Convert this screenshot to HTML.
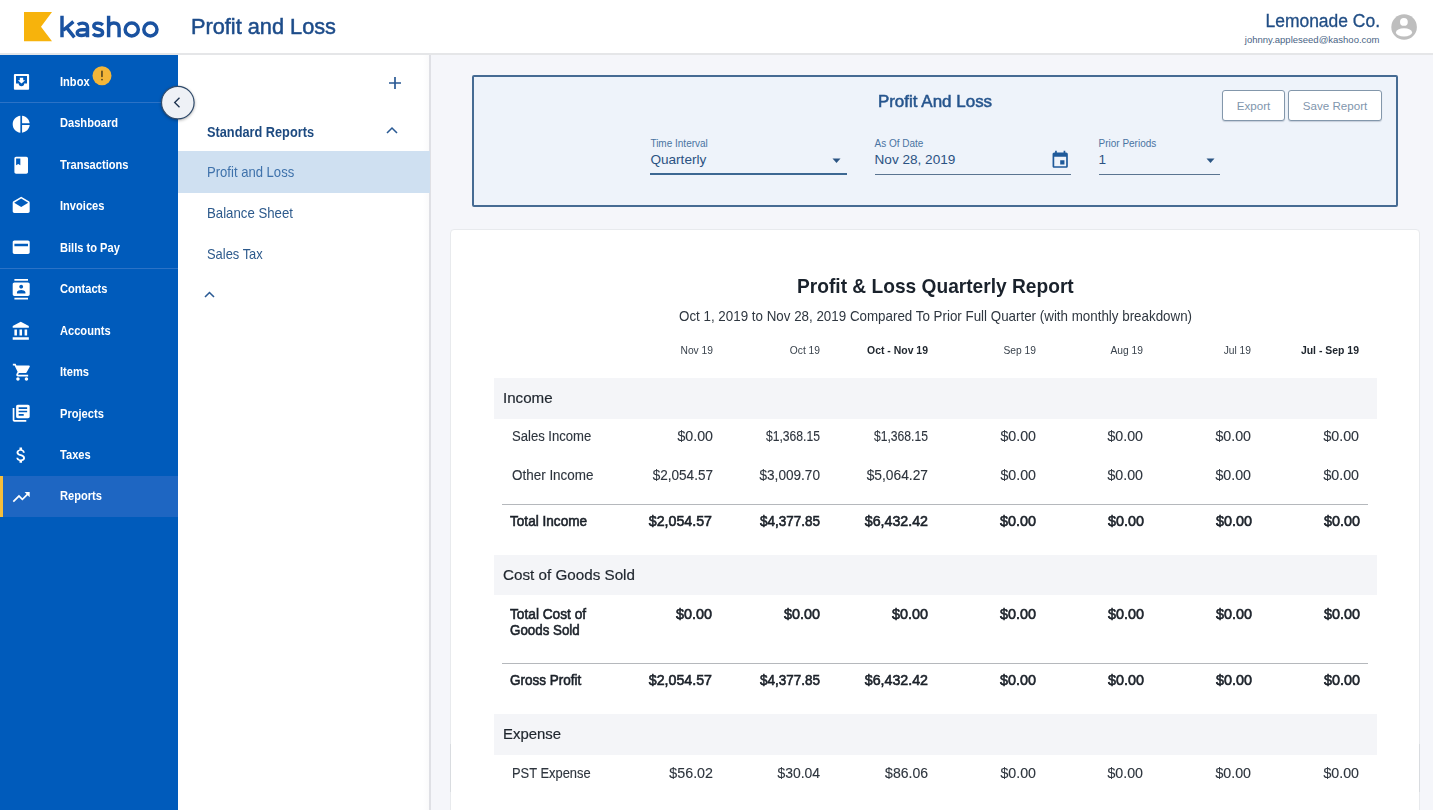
<!DOCTYPE html>
<html><head><meta charset="utf-8">
<style>
*{box-sizing:border-box;margin:0;padding:0}
html,body{width:1433px;height:810px;overflow:hidden;background:#f5f6fa;font-family:"Liberation Sans",sans-serif;position:relative}
.t{position:absolute;white-space:nowrap}
.r{position:absolute}
svg{position:absolute;overflow:visible}
</style></head><body>
<div class="r" style="left:0;top:0;width:1433px;height:54px;background:#fff"></div>
<div class="r" style="left:0;top:53px;width:1433px;height:2px;background:#e5e6e8"></div>
<div class="r" style="left:0;top:55px;width:178px;height:755px;background:#005bbb"></div>
<div class="r" style="left:178px;top:55px;width:251px;height:755px;background:#fff"></div>
<div class="r" style="left:423px;top:55px;width:6px;height:755px;background:linear-gradient(90deg,#fff,#fafafb)"></div>
<div class="r" style="left:429.2px;top:55px;width:1.4px;height:755px;background:#dfe0e5"></div>
<svg style="left:0;top:0" width="60" height="54"><polygon points="24,12 52,12 41,26.8 52,41.3 24,41.3" fill="#f7b30c"/></svg>
<svg style="left:0;top:0" width="170" height="54"><g fill="none" stroke="#1a52a0" stroke-width="3.45"><path d="M62,15.7 V37.3 M73.4,21.6 L63.3,30.3 M66.4,27.3 L74.4,37.3"/><path d="M77.8,24.7 C79.3,23.6 80.9,23.1 82.6,23.1 C85.9,23.1 87.5,24.8 87.5,27.6 V37.3 M87.5,29.7 H82.3 C79.2,29.7 77.2,31.1 77.2,32.7 C77.2,34.4 79,35.4 81.8,35.4 C85.2,35.4 87.5,33.8 87.5,31.5"/><path d="M102.9,25 C101.6,23.8 99.9,23.1 97.9,23.1 C95.4,23.1 93.8,24.3 93.8,26.1 C93.8,28 95.8,28.8 98.3,29.3 C101,29.8 102.6,30.8 102.6,32.8 C102.6,34.7 100.6,35.8 98,35.8 C95.9,35.8 94.2,35.1 93,33.8"/><path d="M108.6,15.7 V37.3 M108.6,28 C108.6,24.9 110.8,23 113.8,23 C117.1,23 119.1,25 119.1,28.4 V37.3"/><ellipse cx="131.75" cy="29.5" rx="6.6" ry="6.5"/><ellipse cx="150.4" cy="29.5" rx="6.6" ry="6.5"/></g></svg>
<div class="t" style="top:14.07px;font-size:21.3px;line-height:27.69px;color:#1d4c8a;font-weight:normal;-webkit-text-stroke:0.5px #1d4c8a;transform:scaleX(1.0206);transform-origin:0 0;left:190.8px;">Profit and Loss</div>
<div class="t" style="top:9.56px;font-size:18px;line-height:23.4px;color:#214e85;font-weight:normal;-webkit-text-stroke:0.3px #214e85;transform:scaleX(0.9698);transform-origin:100% 0;left:979.5px;width:400px;text-align:right;">Lemonade Co.</div>
<div class="t" style="top:33.93px;font-size:9.5px;line-height:12.35px;color:#4a6485;font-weight:normal;left:979.5px;width:400px;text-align:right;">johnny.appleseed@kashoo.com</div>
<svg style="left:1391px;top:13.5px" width="26" height="26" viewBox="0 0 26 26"><circle cx="13.1" cy="13.05" r="12.8" fill="#bebebe"/><circle cx="12.9" cy="7.9" r="3.9" fill="#fff"/><ellipse cx="13" cy="18.4" rx="8.1" ry="4.1" fill="#fff"/></svg>
<div class="r" style="left:0;top:475.5px;width:178px;height:41.5px;background:#1e66c2"></div>
<div class="r" style="left:0;top:475.5px;width:3px;height:41.5px;background:#f5be3c"></div>
<div class="r" style="left:0;top:102px;width:178px;height:1px;background:#2b72c6"></div>
<div class="r" style="left:0;top:268px;width:178px;height:1px;background:#2b72c6"></div>
<div class="t" style="top:75.04px;font-size:12.0px;line-height:15.6px;color:#ffffff;font-weight:bold;transform:scaleX(0.925);transform-origin:0 0;left:59.5px;">Inbox</div>
<svg style="left:0;top:0" width="40" height="100"><path d="M14.9,73.9 H28.1 Q29.1,73.9 29.1,74.9 V88.8 Q29.1,89.8 28.1,89.8 H14.9 Q13.9,89.8 13.9,88.8 V74.9 Q13.9,73.9 14.9,73.9Z M16,76.1 V83.6 H18.7 A2.75,2.75 0 0 0 24.2,83.6 H27 V76.1Z" fill="#fff" fill-rule="evenodd"/><path d="M19.8,77.8 H23.2 V80.3 H25.1 L21.5,83.4 L17.9,80.3 H19.8Z" fill="#fff"/></svg>
<div class="t" style="top:116.48px;font-size:12.0px;line-height:15.6px;color:#ffffff;font-weight:bold;transform:scaleX(0.925);transform-origin:0 0;left:59.5px;">Dashboard</div>
<svg style="left:11.30px;top:113.80px" width="20.4" height="20.4" viewBox="0 0 24 24"><path d="M11 2v20c-5.07-.5-9-4.79-9-10s3.93-9.5 9-10zm2.03 0v8.99H22c-.47-4.74-4.24-8.52-8.97-8.99zm0 11.01V22c4.74-.47 8.5-4.25 8.97-8.99h-8.97z" fill="#fff" fill-rule="evenodd"/></svg>
<div class="t" style="top:157.92px;font-size:12.0px;line-height:15.6px;color:#ffffff;font-weight:bold;transform:scaleX(0.925);transform-origin:0 0;left:59.5px;">Transactions</div>
<svg style="left:11.30px;top:154.80px" width="20.4" height="20.4" viewBox="0 0 24 24"><path d="M18 2H6c-1.1 0-2 .9-2 2v16c0 1.1.9 2 2 2h12c1.1 0 2-.9 2-2V4c0-1.1-.9-2-2-2zM6 4h5v8l-2.5-1.5L6 12V4z" fill="#fff" fill-rule="evenodd"/></svg>
<div class="t" style="top:199.36px;font-size:12.0px;line-height:15.6px;color:#ffffff;font-weight:bold;transform:scaleX(0.925);transform-origin:0 0;left:59.5px;">Invoices</div>
<svg style="left:11.30px;top:196.07px" width="20.4" height="20.4" viewBox="0 0 24 24"><path d="M21.99 8c0-.72-.37-1.35-.94-1.7L12 1 2.95 6.3C2.38 6.65 2 7.28 2 8v10c0 1.1.9 2 2 2h16c1.1 0 2-.9 2-2l-.01-10zM12 13L3.74 7.84 12 3l8.26 4.84L12 13z" fill="#fff" fill-rule="evenodd"/></svg>
<div class="t" style="top:240.80px;font-size:12.0px;line-height:15.6px;color:#ffffff;font-weight:bold;transform:scaleX(0.925);transform-origin:0 0;left:59.5px;">Bills to Pay</div>
<svg style="left:11.30px;top:237.40px" width="20.4" height="20.4" viewBox="0 0 24 24"><path d="M20 4H4c-1.11 0-1.99.89-1.99 2L2 18c0 1.11.89 2 2 2h16c1.11 0 2-.89 2-2V6c0-1.11-.89-2-2-2zM4 8v3h16V8z" fill="#fff" fill-rule="evenodd"/></svg>
<div class="t" style="top:282.24px;font-size:12.0px;line-height:15.6px;color:#ffffff;font-weight:bold;transform:scaleX(0.925);transform-origin:0 0;left:59.5px;">Contacts</div>
<svg style="left:11.30px;top:279.10px" width="20.4" height="20.4" viewBox="0 0 24 24"><path d="M20 0H4v2h16V0zM4 24h16v-2H4v2zM20 4H4c-1.1 0-2 .9-2 2v12c0 1.1.9 2 2 2h16c1.1 0 2-.9 2-2V6c0-1.1-.9-2-2-2zm-8 2.75c1.24 0 2.25 1.01 2.25 2.25s-1.01 2.25-2.25 2.25S9.75 10.24 9.75 9 10.76 6.75 12 6.75zM17 17H7v-1.5c0-1.670 3.33-2.5 5-2.5s5 .83 5 2.5V17z" fill="#fff" fill-rule="evenodd"/></svg>
<div class="t" style="top:323.68px;font-size:12.0px;line-height:15.6px;color:#ffffff;font-weight:bold;transform:scaleX(0.925);transform-origin:0 0;left:59.5px;">Accounts</div>
<svg style="left:11.30px;top:320.73px" width="20.4" height="20.4" viewBox="0 0 24 24"><path d="M4 10v7h3v-7H4zm6 0v7h3v-7h-3zM2 22h19v-3H2v3zm14-12v7h3v-7h-3zm-4.5-9L2 6v2h19V6l-9.5-5z" fill="#fff" fill-rule="evenodd"/></svg>
<div class="t" style="top:365.12px;font-size:12.0px;line-height:15.6px;color:#ffffff;font-weight:bold;transform:scaleX(0.925);transform-origin:0 0;left:59.5px;">Items</div>
<svg style="left:12.15px;top:361.70px" width="20.4" height="20.4" viewBox="0 0 24 24"><path d="M7 18c-1.1 0-1.99.9-1.99 2S5.9 22 7 22s2-.9 2-2-.9-2-2-2zM1 2v2h2l3.6 7.59-1.35 2.45c-.16.28-.25.61-.25.96 0 1.1.9 2 2 2h12v-2H7.420c-.14 0-.25-.11-.25-.25l.03-.12.9-1.63h7.450c.75 0 1.41-.41 1.75-1.03l3.58-6.49c.08-.14.12-.31.12-.48 0-.55-.45-1-1-1H5.21l-.94-2H1zm16 16c-1.1 0-1.99.9-1.99 2s.89 2 1.99 2 2-.9 2-2-.9-2-2-2z" fill="#fff" fill-rule="evenodd"/></svg>
<div class="t" style="top:406.56px;font-size:12.0px;line-height:15.6px;color:#ffffff;font-weight:bold;transform:scaleX(0.925);transform-origin:0 0;left:59.5px;">Projects</div>
<svg style="left:11.30px;top:403.20px" width="20.4" height="20.4" viewBox="0 0 24 24"><path d="M4 6H2v14c0 1.1.9 2 2 2h14v-2H4V6zm16-4H8c-1.1 0-2 .9-2 2v12c0 1.1.9 2 2 2h12c1.1 0 2-.9 2-2V4c0-1.1-.9-2-2-2zm-1 9H9V9h10v2zm-4 4H9v-2h6v2zm4-8H9V5h10v2z" fill="#fff" fill-rule="evenodd"/></svg>
<div class="t" style="top:448.00px;font-size:12.0px;line-height:15.6px;color:#ffffff;font-weight:bold;transform:scaleX(0.925);transform-origin:0 0;left:59.5px;">Taxes</div>
<svg style="left:11.30px;top:444.80px" width="20.4" height="20.4" viewBox="0 0 24 24"><path d="M11.8 10.9c-2.27-.59-3-1.2-3-2.15 0-1.09 1.01-1.85 2.7-1.850 1.78 0 2.44.85 2.5 2.1h2.21c-.07-1.72-1.12-3.3-3.21-3.81V3h-3v2.16c-1.94.42-3.5 1.68-3.5 3.61 0 2.31 1.91 3.46 4.7 4.13 2.5.6 3 1.48 3 2.41 0 .69-.49 1.79-2.7 1.79-2.06 0-2.87-.92-2.98-2.1h-2.2c.12 2.19 1.76 3.42 3.68 3.83V21h3v-2.15c1.95-.37 3.5-1.5 3.5-3.55 0-2.840-2.43-3.81-4.7-4.4z" fill="#fff" fill-rule="evenodd"/></svg>
<div class="t" style="top:489.44px;font-size:12.0px;line-height:15.6px;color:#ffffff;font-weight:bold;transform:scaleX(0.925);transform-origin:0 0;left:59.5px;">Reports</div>
<svg style="left:11.30px;top:486.50px" width="20.4" height="20.4" viewBox="0 0 24 24"><path d="M16 6l2.29 2.29-4.88 4.88-4-4L2 16.59 3.410 18l6-6 4 4 6.3-6.29L22 12V6z" fill="#fff" fill-rule="evenodd"/></svg>
<svg style="left:92px;top:65.5px" width="20" height="20" viewBox="0 0 20 20"><circle cx="10" cy="9.8" r="9.5" fill="#f4b638"/><rect x="9.1" y="4.6" width="1.7" height="6.6" rx="0.8" fill="#5a4a22"/><circle cx="10" cy="13.6" r="0.95" fill="#5a4a22"/></svg>
<svg style="left:160px;top:85px" width="36" height="36" viewBox="0 0 36 36"><circle cx="17.8" cy="17.6" r="16.3" fill="#eef1f6" stroke="#2f4a6a" stroke-width="1.2" style="filter:drop-shadow(0 1px 1.5px rgba(0,0,0,0.3))"/><path d="M19.5,12.8 L14.7,17.5 L19.5,22.2" fill="none" stroke="#1e3350" stroke-width="1.35"/></svg>
<div class="r" style="left:178px;top:151.3px;width:252px;height:41.4px;background:#cfe0f1"></div>
<svg style="left:388px;top:76px" width="14" height="14"><path d="M7,1 V13 M1,7 H13" stroke="#2a5a94" stroke-width="1.7"/></svg>
<div class="t" style="top:122.75px;font-size:14.0px;line-height:18.2px;color:#1d4a80;font-weight:bold;transform:scaleX(0.911);transform-origin:0 0;left:206.8px;">Standard Reports</div>
<svg style="left:385px;top:125px" width="14" height="10"><path d="M2,8 L7,3 L12,8" fill="none" stroke="#2a5a94" stroke-width="1.55"/></svg>
<div class="t" style="top:163.05px;font-size:14.5px;line-height:18.85px;color:#3f72ab;font-weight:normal;transform:scaleX(0.9016);transform-origin:0 0;left:206.6px;">Profit and Loss</div>
<div class="t" style="top:204.05px;font-size:14.5px;line-height:18.85px;color:#2d5a8c;font-weight:normal;transform:scaleX(0.9108);transform-origin:0 0;left:206.6px;">Balance Sheet</div>
<div class="t" style="top:245.45px;font-size:14.5px;line-height:18.85px;color:#2d5a8c;font-weight:normal;transform:scaleX(0.8898);transform-origin:0 0;left:206.6px;">Sales Tax</div>
<svg style="left:203px;top:289px" width="14" height="10"><path d="M2,8 L6.5,3.5 L11,8" fill="none" stroke="#2a5a94" stroke-width="1.55"/></svg>
<div class="r" style="left:472px;top:75px;width:926px;height:132px;border:2px solid #466b93;border-radius:2px;background:#eef3fa"></div>
<div class="t" style="top:91.46px;font-size:16.4px;line-height:21.32px;color:#26558d;font-weight:normal;-webkit-text-stroke:0.5px #26558d;transform:scaleX(1.0362);transform-origin:50% 0;left:535.3px;width:800px;text-align:center;">Profit And Loss</div>
<div class="r" style="left:1222px;top:90px;width:63px;height:31px;border:1.5px solid #8397ab;border-radius:3px;background:#fff;box-shadow:0 1px 1px rgba(40,60,90,0.2)"></div>
<div class="t" style="top:98.44px;font-size:11.6px;line-height:15.08px;color:#7f96ad;font-weight:normal;left:853.5px;width:800px;text-align:center;">Export</div>
<div class="r" style="left:1288px;top:90px;width:94px;height:31px;border:1.5px solid #8397ab;border-radius:3px;background:#fff;box-shadow:0 1px 1px rgba(40,60,90,0.2)"></div>
<div class="t" style="top:98.44px;font-size:11.6px;line-height:15.08px;color:#7f96ad;font-weight:normal;left:935.0px;width:800px;text-align:center;">Save Report</div>
<div class="t" style="top:136.53px;font-size:10px;line-height:13.0px;color:#4a74a2;font-weight:normal;left:650.4px;">Time Interval</div>
<div class="t" style="top:151.05px;font-size:13.6px;line-height:17.68px;color:#2b5282;font-weight:normal;left:650.4px;">Quarterly</div>
<div class="r" style="left:650.4px;top:173px;width:196.5px;height:2px;background:#3d6892"></div>
<div class="t" style="top:136.53px;font-size:10px;line-height:13.0px;color:#4a74a2;font-weight:normal;left:874.5px;">As Of Date</div>
<div class="t" style="top:151.05px;font-size:13.6px;line-height:17.68px;color:#2b5282;font-weight:normal;left:874.5px;">Nov 28, 2019</div>
<div class="r" style="left:874.5px;top:174px;width:196.5px;height:1px;background:#5a7490"></div>
<div class="t" style="top:136.53px;font-size:10px;line-height:13.0px;color:#4a74a2;font-weight:normal;left:1098.5px;">Prior Periods</div>
<div class="t" style="top:151.05px;font-size:13.6px;line-height:17.68px;color:#2b5282;font-weight:normal;left:1098.5px;">1</div>
<div class="r" style="left:1098.5px;top:174px;width:121.5px;height:1px;background:#5a7490"></div>
<svg style="left:832px;top:157.5px" width="10" height="6"><path d="M0.5,0.5 H8.5 L4.5,5Z" fill="#2b5583"/></svg>
<svg style="left:1205.5px;top:157.5px" width="10" height="6"><path d="M0.5,0.5 H8.5 L4.5,5Z" fill="#2b5583"/></svg>
<svg style="left:1050.4px;top:149.7px" width="20.4" height="20.4" viewBox="0 0 24 24"><path d="M17 12h-5v5h5v-5zM16 1v2H8V1H6v2H5c-1.11 0-1.99.9-1.99 2L3 19c0 1.1.89 2 2 2h14c1.1 0 2-.9 2-2V5c0-1.1-.9-2-2-2h-1V1h-2zm3 18H5V8h14v11z" fill="#1f5a9a"/></svg>
<div class="r" style="left:450px;top:228.5px;width:970px;height:600px;background:#fff;border-radius:4px;border:1px solid #e8eaed"></div>
<div class="r" style="left:450px;top:744px;width:1px;height:48px;background:#d9dce0"></div>
<div class="r" style="left:1419px;top:744px;width:1px;height:48px;background:#d9dce0"></div>
<div class="t" style="top:274.07px;font-size:19.8px;line-height:25.74px;color:#1a222c;font-weight:bold;transform:scaleX(0.9684);transform-origin:0 0;left:797px;">Profit &amp; Loss Quarterly Report</div>
<div class="t" style="top:307.05px;font-size:14.5px;line-height:18.85px;color:#2f3740;font-weight:normal;transform:scaleX(0.9217);transform-origin:0 0;left:679px;">Oct 1, 2019 to Nov 28, 2019 Compared To Prior Full Quarter (with monthly breakdown)</div>
<div class="t" style="top:343.14px;font-size:10.8px;line-height:14.04px;color:#39424c;font-weight:normal;transform:scaleX(0.95);transform-origin:100% 0;left:312.6px;width:400px;text-align:right;">Nov 19</div>
<div class="t" style="top:343.14px;font-size:10.8px;line-height:14.04px;color:#39424c;font-weight:normal;transform:scaleX(0.95);transform-origin:100% 0;left:420.20000000000005px;width:400px;text-align:right;">Oct 19</div>
<div class="t" style="top:343.14px;font-size:10.8px;line-height:14.04px;color:#1e252d;font-weight:bold;transform:scaleX(0.968);transform-origin:100% 0;left:528.1px;width:400px;text-align:right;">Oct - Nov 19</div>
<div class="t" style="top:343.14px;font-size:10.8px;line-height:14.04px;color:#39424c;font-weight:normal;transform:scaleX(0.95);transform-origin:100% 0;left:636px;width:400px;text-align:right;">Sep 19</div>
<div class="t" style="top:343.14px;font-size:10.8px;line-height:14.04px;color:#39424c;font-weight:normal;transform:scaleX(0.95);transform-origin:100% 0;left:743.2px;width:400px;text-align:right;">Aug 19</div>
<div class="t" style="top:343.14px;font-size:10.8px;line-height:14.04px;color:#39424c;font-weight:normal;transform:scaleX(0.95);transform-origin:100% 0;left:850.8px;width:400px;text-align:right;">Jul 19</div>
<div class="t" style="top:343.14px;font-size:10.8px;line-height:14.04px;color:#1e252d;font-weight:bold;transform:scaleX(0.968);transform-origin:100% 0;left:958.8px;width:400px;text-align:right;">Jul - Sep 19</div>
<div class="r" style="left:494px;top:378.2px;width:883px;height:40.7px;background:#f4f5f8"></div>
<div class="r" style="left:494px;top:554.5px;width:883px;height:40.1px;background:#f4f5f8"></div>
<div class="r" style="left:494px;top:713.5px;width:883px;height:41.1px;background:#f4f5f8"></div>
<div class="r" style="left:502px;top:504px;width:866px;height:1.2px;background:#b5b8bc"></div>
<div class="r" style="left:502px;top:662.6px;width:866px;height:1.2px;background:#b5b8bc"></div>
<div class="t" style="top:388.25px;font-size:15.1px;line-height:19.63px;color:#1f262e;font-weight:normal;-webkit-text-stroke:0.2px #1f262e;transform:scaleX(1.0017);transform-origin:0 0;left:503.3px;">Income</div>
<div class="t" style="top:565.15px;font-size:15.1px;line-height:19.63px;color:#1f262e;font-weight:normal;-webkit-text-stroke:0.2px #1f262e;transform:scaleX(1.0082);transform-origin:0 0;left:503.1px;">Cost of Goods Sold</div>
<div class="t" style="top:724.05px;font-size:15.1px;line-height:19.63px;color:#1f262e;font-weight:normal;-webkit-text-stroke:0.2px #1f262e;transform:scaleX(0.9871);transform-origin:0 0;left:503.1px;">Expense</div>
<div class="t" style="top:427.85px;font-size:13.8px;line-height:17.94px;color:#2e353e;font-weight:normal;-webkit-text-stroke:0.12px #2e353e;transform:scaleX(0.9485);transform-origin:0 0;left:511.5px;">Sales Income</div>
<div class="t" style="top:427.85px;font-size:13.8px;line-height:17.94px;color:#2e353e;font-weight:normal;-webkit-text-stroke:0.12px #2e353e;transform:scaleX(1.031);transform-origin:100% 0;left:312.6px;width:400px;text-align:right;">$0.00</div>
<div class="t" style="top:427.85px;font-size:13.8px;line-height:17.94px;color:#2e353e;font-weight:normal;-webkit-text-stroke:0.12px #2e353e;transform:scaleX(0.8797);transform-origin:100% 0;left:420.20000000000005px;width:400px;text-align:right;">$1,368.15</div>
<div class="t" style="top:427.85px;font-size:13.8px;line-height:17.94px;color:#2e353e;font-weight:normal;-webkit-text-stroke:0.12px #2e353e;transform:scaleX(0.8797);transform-origin:100% 0;left:528.1px;width:400px;text-align:right;">$1,368.15</div>
<div class="t" style="top:427.85px;font-size:13.8px;line-height:17.94px;color:#2e353e;font-weight:normal;-webkit-text-stroke:0.12px #2e353e;transform:scaleX(1.031);transform-origin:100% 0;left:636px;width:400px;text-align:right;">$0.00</div>
<div class="t" style="top:427.85px;font-size:13.8px;line-height:17.94px;color:#2e353e;font-weight:normal;-webkit-text-stroke:0.12px #2e353e;transform:scaleX(1.031);transform-origin:100% 0;left:743.2px;width:400px;text-align:right;">$0.00</div>
<div class="t" style="top:427.85px;font-size:13.8px;line-height:17.94px;color:#2e353e;font-weight:normal;-webkit-text-stroke:0.12px #2e353e;transform:scaleX(1.031);transform-origin:100% 0;left:850.8px;width:400px;text-align:right;">$0.00</div>
<div class="t" style="top:427.85px;font-size:13.8px;line-height:17.94px;color:#2e353e;font-weight:normal;-webkit-text-stroke:0.12px #2e353e;transform:scaleX(1.031);transform-origin:100% 0;left:958.8px;width:400px;text-align:right;">$0.00</div>
<div class="t" style="top:467.15px;font-size:13.8px;line-height:17.94px;color:#2e353e;font-weight:normal;-webkit-text-stroke:0.12px #2e353e;transform:scaleX(0.9749);transform-origin:0 0;left:511.5px;">Other Income</div>
<div class="t" style="top:467.15px;font-size:13.8px;line-height:17.94px;color:#2e353e;font-weight:normal;-webkit-text-stroke:0.12px #2e353e;transform:scaleX(0.9823);transform-origin:100% 0;left:312.6px;width:400px;text-align:right;">$2,054.57</div>
<div class="t" style="top:467.15px;font-size:13.8px;line-height:17.94px;color:#2e353e;font-weight:normal;-webkit-text-stroke:0.12px #2e353e;transform:scaleX(0.9856);transform-origin:100% 0;left:420.20000000000005px;width:400px;text-align:right;">$3,009.70</div>
<div class="t" style="top:467.15px;font-size:13.8px;line-height:17.94px;color:#2e353e;font-weight:normal;-webkit-text-stroke:0.12px #2e353e;transform:scaleX(0.9986);transform-origin:100% 0;left:528.1px;width:400px;text-align:right;">$5,064.27</div>
<div class="t" style="top:467.15px;font-size:13.8px;line-height:17.94px;color:#2e353e;font-weight:normal;-webkit-text-stroke:0.12px #2e353e;transform:scaleX(1.031);transform-origin:100% 0;left:636px;width:400px;text-align:right;">$0.00</div>
<div class="t" style="top:467.15px;font-size:13.8px;line-height:17.94px;color:#2e353e;font-weight:normal;-webkit-text-stroke:0.12px #2e353e;transform:scaleX(1.031);transform-origin:100% 0;left:743.2px;width:400px;text-align:right;">$0.00</div>
<div class="t" style="top:467.15px;font-size:13.8px;line-height:17.94px;color:#2e353e;font-weight:normal;-webkit-text-stroke:0.12px #2e353e;transform:scaleX(1.031);transform-origin:100% 0;left:850.8px;width:400px;text-align:right;">$0.00</div>
<div class="t" style="top:467.15px;font-size:13.8px;line-height:17.94px;color:#2e353e;font-weight:normal;-webkit-text-stroke:0.12px #2e353e;transform:scaleX(1.031);transform-origin:100% 0;left:958.8px;width:400px;text-align:right;">$0.00</div>
<div class="t" style="top:512.25px;font-size:14.5px;line-height:18.85px;color:#1b2129;font-weight:normal;-webkit-text-stroke:0.6px #1b2129;transform:scaleX(0.9379);transform-origin:0 0;left:510px;">Total Income</div>
<div class="t" style="top:512.25px;font-size:14.5px;line-height:18.85px;color:#1b2129;font-weight:normal;-webkit-text-stroke:0.6px #1b2129;transform:scaleX(0.9798);transform-origin:100% 0;left:312px;width:400px;text-align:right;">$2,054.57</div>
<div class="t" style="top:512.25px;font-size:14.5px;line-height:18.85px;color:#1b2129;font-weight:normal;-webkit-text-stroke:0.6px #1b2129;transform:scaleX(0.9318);transform-origin:100% 0;left:420px;width:400px;text-align:right;">$4,377.85</div>
<div class="t" style="top:512.25px;font-size:14.5px;line-height:18.85px;color:#1b2129;font-weight:normal;-webkit-text-stroke:0.6px #1b2129;transform:scaleX(0.9798);transform-origin:100% 0;left:528.1px;width:400px;text-align:right;">$6,432.42</div>
<div class="t" style="top:512.25px;font-size:14.5px;line-height:18.85px;color:#1b2129;font-weight:normal;-webkit-text-stroke:0.6px #1b2129;transform:scaleX(0.9922);transform-origin:100% 0;left:636.4000000000001px;width:400px;text-align:right;">$0.00</div>
<div class="t" style="top:512.25px;font-size:14.5px;line-height:18.85px;color:#1b2129;font-weight:normal;-webkit-text-stroke:0.6px #1b2129;transform:scaleX(0.9922);transform-origin:100% 0;left:744.3px;width:400px;text-align:right;">$0.00</div>
<div class="t" style="top:512.25px;font-size:14.5px;line-height:18.85px;color:#1b2129;font-weight:normal;-webkit-text-stroke:0.6px #1b2129;transform:scaleX(0.9922);transform-origin:100% 0;left:852.3px;width:400px;text-align:right;">$0.00</div>
<div class="t" style="top:512.25px;font-size:14.5px;line-height:18.85px;color:#1b2129;font-weight:normal;-webkit-text-stroke:0.6px #1b2129;transform:scaleX(0.9922);transform-origin:100% 0;left:960.3px;width:400px;text-align:right;">$0.00</div>
<div class="t" style="top:604.75px;font-size:14.5px;line-height:18.85px;color:#1b2129;font-weight:normal;-webkit-text-stroke:0.6px #1b2129;transform:scaleX(0.9443);transform-origin:0 0;left:510px;">Total Cost of</div>
<div class="t" style="top:604.75px;font-size:14.5px;line-height:18.85px;color:#1b2129;font-weight:normal;-webkit-text-stroke:0.6px #1b2129;transform:scaleX(0.9922);transform-origin:100% 0;left:312px;width:400px;text-align:right;">$0.00</div>
<div class="t" style="top:604.75px;font-size:14.5px;line-height:18.85px;color:#1b2129;font-weight:normal;-webkit-text-stroke:0.6px #1b2129;transform:scaleX(0.9922);transform-origin:100% 0;left:420px;width:400px;text-align:right;">$0.00</div>
<div class="t" style="top:604.75px;font-size:14.5px;line-height:18.85px;color:#1b2129;font-weight:normal;-webkit-text-stroke:0.6px #1b2129;transform:scaleX(0.9922);transform-origin:100% 0;left:528.1px;width:400px;text-align:right;">$0.00</div>
<div class="t" style="top:604.75px;font-size:14.5px;line-height:18.85px;color:#1b2129;font-weight:normal;-webkit-text-stroke:0.6px #1b2129;transform:scaleX(0.9922);transform-origin:100% 0;left:636.4000000000001px;width:400px;text-align:right;">$0.00</div>
<div class="t" style="top:604.75px;font-size:14.5px;line-height:18.85px;color:#1b2129;font-weight:normal;-webkit-text-stroke:0.6px #1b2129;transform:scaleX(0.9922);transform-origin:100% 0;left:744.3px;width:400px;text-align:right;">$0.00</div>
<div class="t" style="top:604.75px;font-size:14.5px;line-height:18.85px;color:#1b2129;font-weight:normal;-webkit-text-stroke:0.6px #1b2129;transform:scaleX(0.9922);transform-origin:100% 0;left:852.3px;width:400px;text-align:right;">$0.00</div>
<div class="t" style="top:604.75px;font-size:14.5px;line-height:18.85px;color:#1b2129;font-weight:normal;-webkit-text-stroke:0.6px #1b2129;transform:scaleX(0.9922);transform-origin:100% 0;left:960.3px;width:400px;text-align:right;">$0.00</div>
<div class="t" style="top:671.25px;font-size:14.5px;line-height:18.85px;color:#1b2129;font-weight:normal;-webkit-text-stroke:0.6px #1b2129;transform:scaleX(0.9315);transform-origin:0 0;left:510px;">Gross Profit</div>
<div class="t" style="top:671.25px;font-size:14.5px;line-height:18.85px;color:#1b2129;font-weight:normal;-webkit-text-stroke:0.6px #1b2129;transform:scaleX(0.9798);transform-origin:100% 0;left:312px;width:400px;text-align:right;">$2,054.57</div>
<div class="t" style="top:671.25px;font-size:14.5px;line-height:18.85px;color:#1b2129;font-weight:normal;-webkit-text-stroke:0.6px #1b2129;transform:scaleX(0.9318);transform-origin:100% 0;left:420px;width:400px;text-align:right;">$4,377.85</div>
<div class="t" style="top:671.25px;font-size:14.5px;line-height:18.85px;color:#1b2129;font-weight:normal;-webkit-text-stroke:0.6px #1b2129;transform:scaleX(0.9798);transform-origin:100% 0;left:528.1px;width:400px;text-align:right;">$6,432.42</div>
<div class="t" style="top:671.25px;font-size:14.5px;line-height:18.85px;color:#1b2129;font-weight:normal;-webkit-text-stroke:0.6px #1b2129;transform:scaleX(0.9922);transform-origin:100% 0;left:636.4000000000001px;width:400px;text-align:right;">$0.00</div>
<div class="t" style="top:671.25px;font-size:14.5px;line-height:18.85px;color:#1b2129;font-weight:normal;-webkit-text-stroke:0.6px #1b2129;transform:scaleX(0.9922);transform-origin:100% 0;left:744.3px;width:400px;text-align:right;">$0.00</div>
<div class="t" style="top:671.25px;font-size:14.5px;line-height:18.85px;color:#1b2129;font-weight:normal;-webkit-text-stroke:0.6px #1b2129;transform:scaleX(0.9922);transform-origin:100% 0;left:852.3px;width:400px;text-align:right;">$0.00</div>
<div class="t" style="top:671.25px;font-size:14.5px;line-height:18.85px;color:#1b2129;font-weight:normal;-webkit-text-stroke:0.6px #1b2129;transform:scaleX(0.9922);transform-origin:100% 0;left:960.3px;width:400px;text-align:right;">$0.00</div>
<div class="t" style="top:764.55px;font-size:13.8px;line-height:17.94px;color:#2e353e;font-weight:normal;-webkit-text-stroke:0.12px #2e353e;transform:scaleX(0.9355);transform-origin:0 0;left:511.5px;">PST Expense</div>
<div class="t" style="top:764.55px;font-size:13.8px;line-height:17.94px;color:#2e353e;font-weight:normal;-webkit-text-stroke:0.12px #2e353e;transform:scaleX(1.0354);transform-origin:100% 0;left:312.6px;width:400px;text-align:right;">$56.02</div>
<div class="t" style="top:764.55px;font-size:13.8px;line-height:17.94px;color:#2e353e;font-weight:normal;-webkit-text-stroke:0.12px #2e353e;transform:scaleX(1.0094);transform-origin:100% 0;left:420.20000000000005px;width:400px;text-align:right;">$30.04</div>
<div class="t" style="top:764.55px;font-size:13.8px;line-height:17.94px;color:#2e353e;font-weight:normal;-webkit-text-stroke:0.12px #2e353e;transform:scaleX(1.0165);transform-origin:100% 0;left:528.1px;width:400px;text-align:right;">$86.06</div>
<div class="t" style="top:764.55px;font-size:13.8px;line-height:17.94px;color:#2e353e;font-weight:normal;-webkit-text-stroke:0.12px #2e353e;transform:scaleX(1.031);transform-origin:100% 0;left:636px;width:400px;text-align:right;">$0.00</div>
<div class="t" style="top:764.55px;font-size:13.8px;line-height:17.94px;color:#2e353e;font-weight:normal;-webkit-text-stroke:0.12px #2e353e;transform:scaleX(1.031);transform-origin:100% 0;left:743.2px;width:400px;text-align:right;">$0.00</div>
<div class="t" style="top:764.55px;font-size:13.8px;line-height:17.94px;color:#2e353e;font-weight:normal;-webkit-text-stroke:0.12px #2e353e;transform:scaleX(1.031);transform-origin:100% 0;left:850.8px;width:400px;text-align:right;">$0.00</div>
<div class="t" style="top:764.55px;font-size:13.8px;line-height:17.94px;color:#2e353e;font-weight:normal;-webkit-text-stroke:0.12px #2e353e;transform:scaleX(1.031);transform-origin:100% 0;left:958.8px;width:400px;text-align:right;">$0.00</div>
<div class="t" style="top:621.25px;font-size:14.5px;line-height:18.85px;color:#1b2129;font-weight:normal;-webkit-text-stroke:0.6px #1b2129;transform:scaleX(0.9199);transform-origin:0 0;left:510px;">Goods Sold</div>
</body></html>
